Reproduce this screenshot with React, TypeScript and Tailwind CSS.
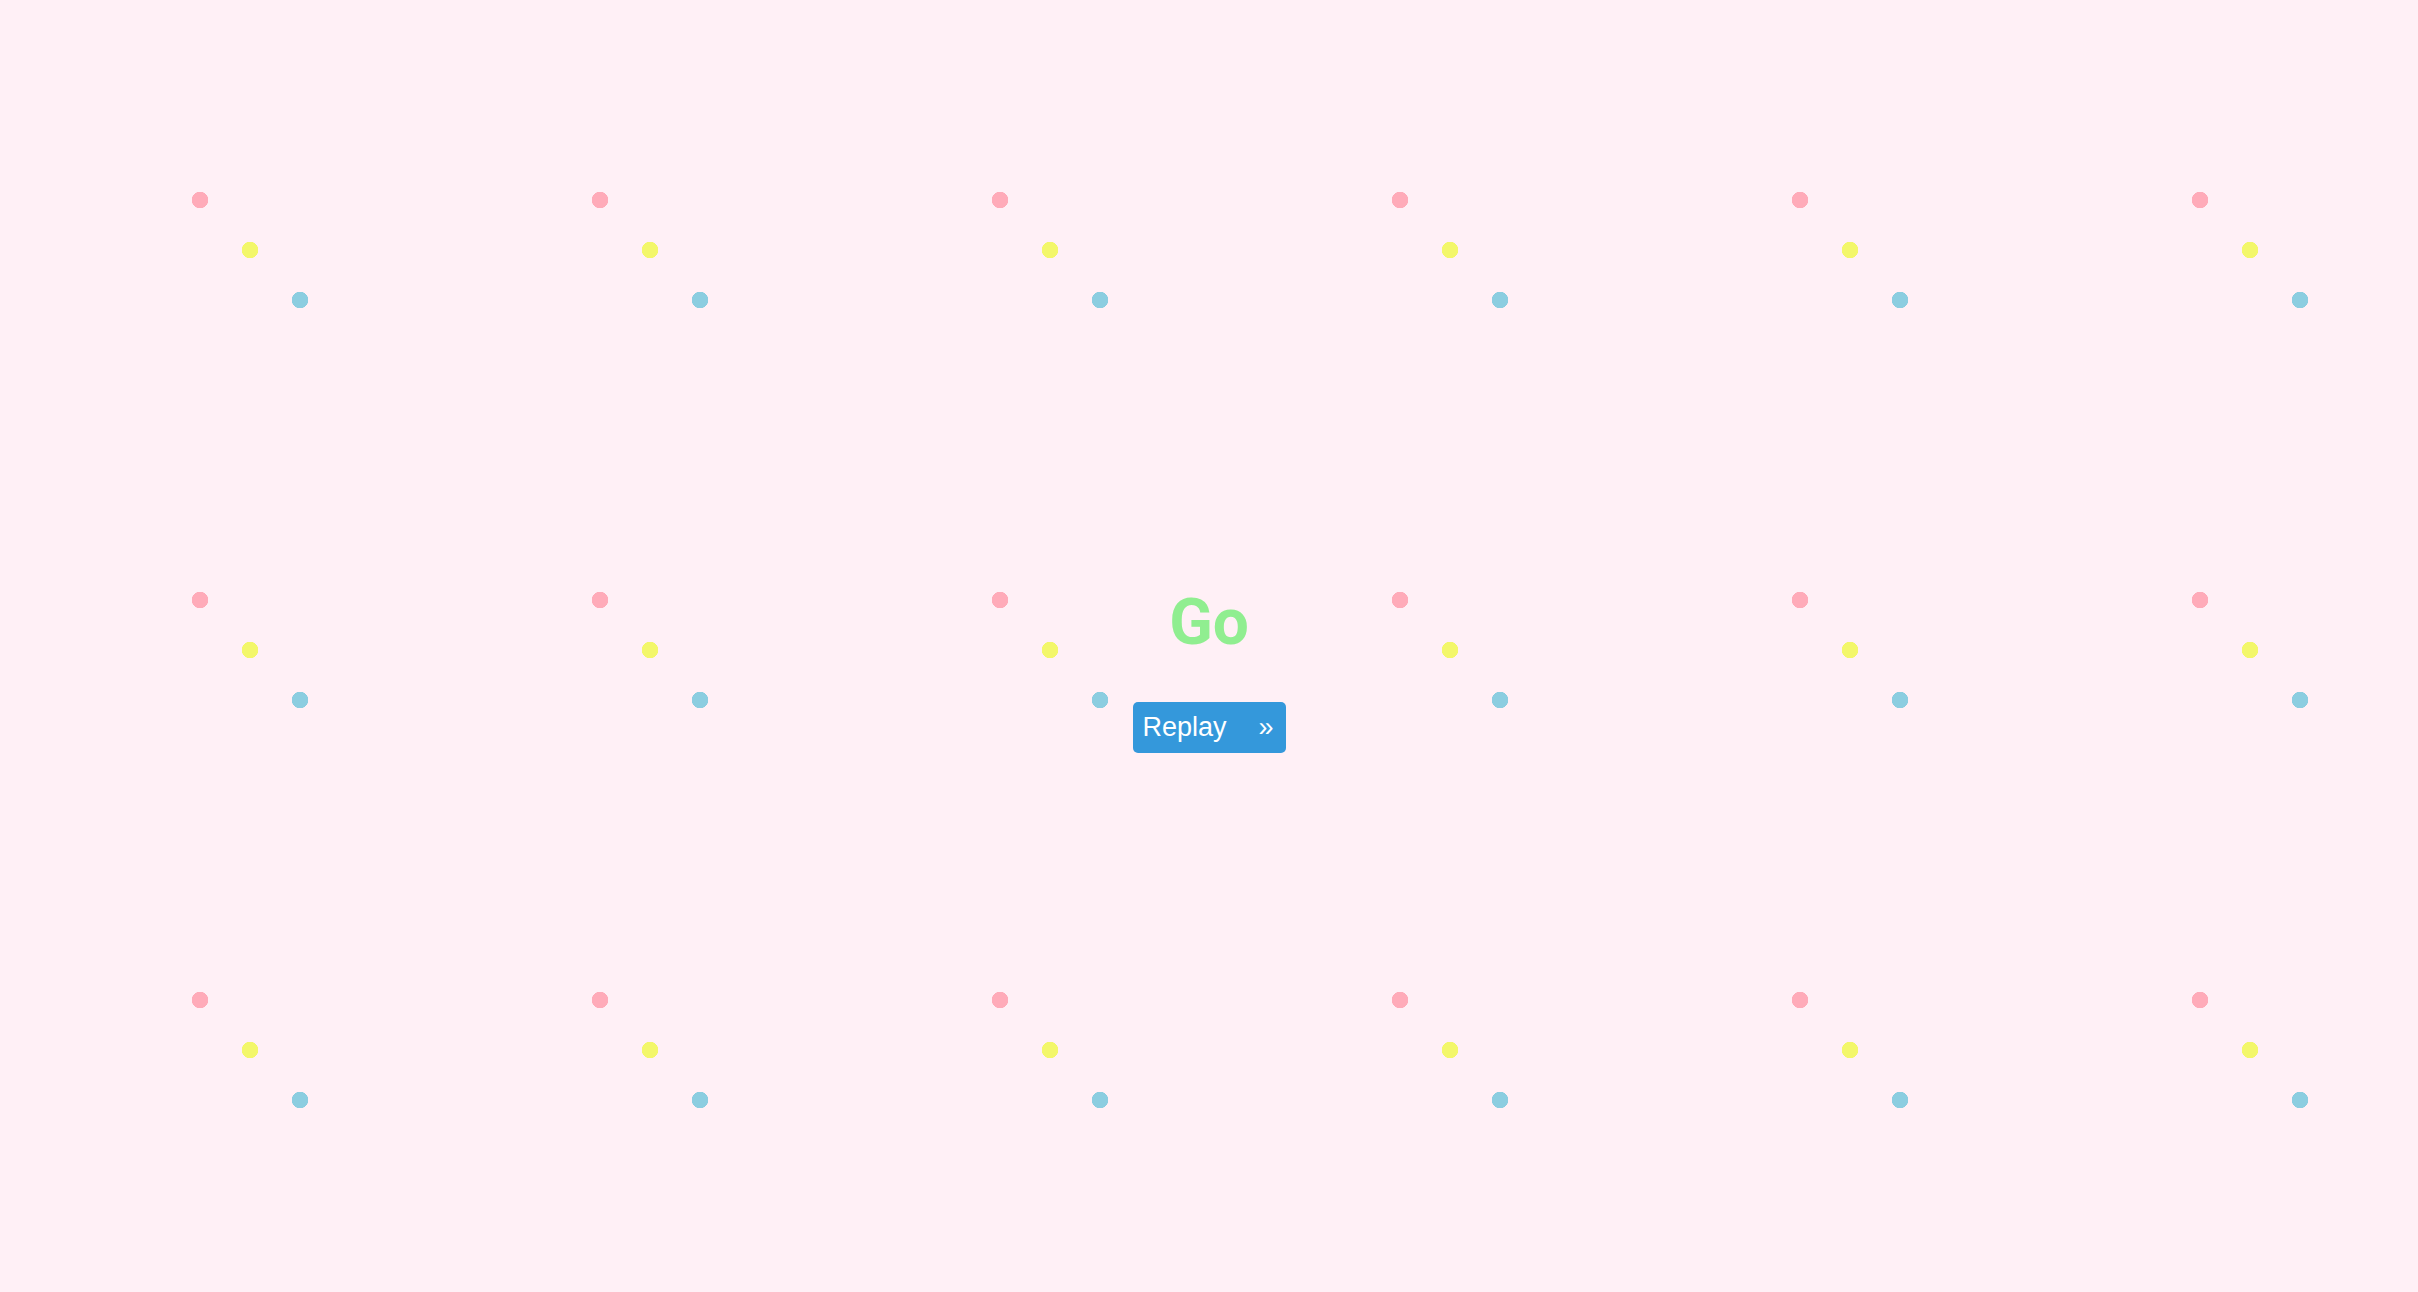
export default function App() {
  return (
    <div className="relative flex h-screen w-full flex-col items-center overflow-hidden bg-[#fff0f6] pt-[585px] [background-image:radial-gradient(circle_at_200px_200px,#ffabb9_0,#ffabb9_8px,transparent_8.5px),radial-gradient(circle_at_250px_250px,#f3f76a_0,#f3f76a_8px,transparent_8.5px),radial-gradient(circle_at_300px_300px,#8bcde0_0,#8bcde0_8px,transparent_8.5px)] [background-size:400px_400px] font-['Liberation_Sans',Arial,sans-serif]">
      <h1 className="m-0 font-['Roboto',sans-serif] text-[64px] font-bold leading-[75px] text-[#90ee90]">Go</h1>
      <button className="mt-[42px] flex h-[51px] w-[153px] items-center justify-between rounded-[5px] bg-[#3498db] pl-[10px] pr-[12px] text-[27px] text-white">
        <span>Replay</span>
        <span>»</span>
      </button>
    </div>
  );
}
